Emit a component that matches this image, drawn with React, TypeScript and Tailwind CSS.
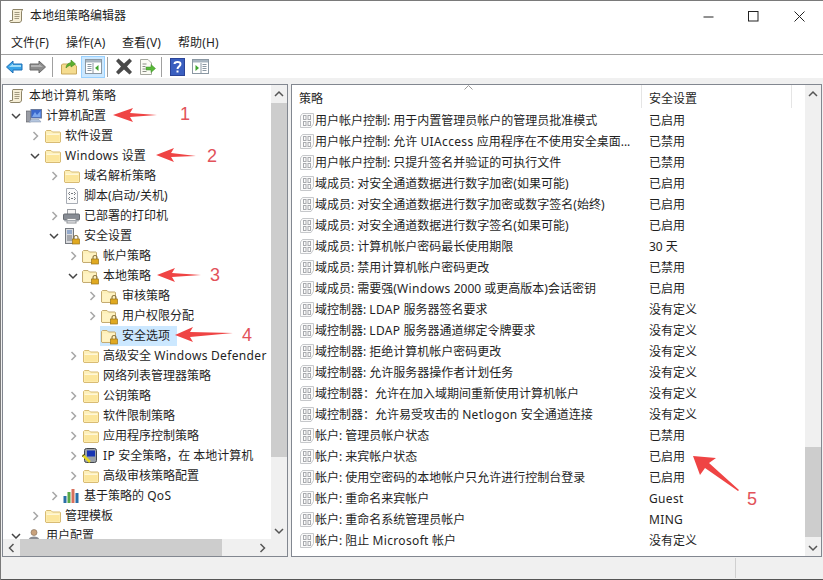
import React from "react";

const FONT = "font-['Noto_Sans','Noto_Sans_CJK_SC',sans-serif]";

function T({ s }: { s: string }) {
  return (
    <>
      {s.split(/([A-Za-z]{2,})/).map((part, i) =>
        i % 2 === 1 ? <span key={i} className="tracking-[0.35px]">{part}</span> : <React.Fragment key={i}>{part}</React.Fragment>
      )}
    </>
  );
}

function Folder() {
  return (
    <svg width="16" height="16" viewBox="0 0 16 16" className="shrink-0">
      <path d="M0.5 14V3.5L1.5 2.5H6L7.5 4H15L15.5 4.5V14L15 14.5H1Z" fill="#fdf0b8" stroke="#d8bb74" />
      <path d="M1.5 5.5H14.5V13.5H1.5Z" fill="#fce69c" />
      <path d="M1.5 5.5H14.5V7H1.5Z" fill="#fff7d8" />
    </svg>
  );
}

function Lock() {
  return (
    <g>
      <path d="M11 11V9.5a2 2 0 0 1 4 0V11" fill="none" stroke="#8a7440" strokeWidth="1.1" />
      <rect x="9.5" y="11" width="7" height="5" fill="#e0a920" stroke="#97731b" strokeWidth="0.7" />
    </g>
  );
}

function LockFolder() {
  return (
    <svg width="17" height="17" viewBox="0 0 17 17" className="shrink-0">
      <path d="M0.5 14V3.5L1.5 2.5H6L7.5 4H14L14.5 4.5V14L14 14.5H1Z" fill="#fdf0b8" stroke="#c4ab72" />
      <path d="M1.5 5.5H13.5V13.5H1.5Z" fill="#fff3c4" />
      <Lock />
    </svg>
  );
}

function Scroll() {
  return (
    <svg width="16" height="16" viewBox="0 0 16 16" className="shrink-0">
      <path d="M4 1.5H14C13 2 12.5 3 12.5 4V12C12.5 13.5 11.5 14.5 10 14.5H2C1 14.5 0.5 13.5 1 12.5H3.5V3C3.5 2 3.5 1.8 4 1.5Z" fill="#f6eed6" stroke="#8d8468" />
      <path d="M5.5 4.5H10.5M5.5 6.5H10.5M5.5 8.5H10.5M5.5 10.5H10" stroke="#a39a80" />
    </svg>
  );
}

function Computer() {
  return (
    <svg width="16" height="16" viewBox="0 0 16 16" className="shrink-0">
      <rect x="0.5" y="3" width="4" height="11" fill="#9a9da5" stroke="#55585f" strokeWidth="0.6" />
      <rect x="5" y="1.5" width="10.5" height="8.5" fill="#3a67cc" stroke="#6a7a9c" />
      <path d="M6 9L9 4L11 7L14.5 3V9H6Z" fill="#7ba6ee" />
      <path d="M3 14L5 11.5H13L15 14Z" fill="#b5c6de" stroke="#7f8fa9" strokeWidth="0.5" />
    </svg>
  );
}

function ScriptDoc() {
  return (
    <svg width="16" height="16" viewBox="0 0 16 16" className="shrink-0">
      <path d="M2.5 0.5H10.5L13.5 3.5V15.5H2.5Z" fill="#fbfbfb" stroke="#a8adb5" />
      <path d="M6 4L4.5 5.5L6 7M10 4L11.5 5.5L10 7M6 9L4.5 10.5L6 12M10 9L11.5 10.5L10 12" fill="none" stroke="#75797f" />
      <path d="M7 5.5H9M7 10.5H9" stroke="#75797f" />
    </svg>
  );
}

function Printer() {
  return (
    <svg width="17" height="16" viewBox="0 0 17 16" className="shrink-0">
      <rect x="4.5" y="1.5" width="8" height="5" fill="#f4f4f4" stroke="#9c9fa4" />
      <rect x="0.5" y="6" width="16" height="6" rx="1" fill="#878c94" stroke="#666a70" />
      <rect x="4" y="10.5" width="9" height="4.5" fill="#f8f8f8" stroke="#8e9196" />
      <rect x="1.5" y="12" width="14" height="1.5" fill="#a3a8ae" />
    </svg>
  );
}

function Server() {
  return (
    <svg width="17" height="17" viewBox="0 0 17 17" className="shrink-0">
      <rect x="2.5" y="0.5" width="8" height="15" fill="#d9dadd" stroke="#767a80" />
      <path d="M4 3H9M4 5H9" stroke="#4f78b8" />
      <rect x="4" y="7" width="5" height="6" fill="#a4a7ad" />
      <Lock />
    </svg>
  );
}

function IpSec() {
  return (
    <svg width="17" height="16" viewBox="0 0 17 16" className="shrink-0">
      <rect x="2.5" y="0.5" width="12" height="14" rx="2" fill="#9aa0a8" stroke="#44474d" />
      <rect x="5" y="2.5" width="8" height="6" fill="#1634b4" />
      <path d="M0.5 7L8 14" stroke="#e8d820" strokeWidth="2.4" />
      <path d="M0 8.5L3 6" stroke="#333" />
    </svg>
  );
}

function Qos() {
  return (
    <svg width="17" height="16" viewBox="0 0 17 16" className="shrink-0">
      <rect x="0.5" y="8" width="3" height="7" fill="#2a6fa8" />
      <rect x="4.5" y="4" width="3" height="11" fill="#58a848" />
      <rect x="8.5" y="1" width="3" height="14" fill="#d8705c" />
      <rect x="12.5" y="5" width="3" height="10" fill="#2a6fa8" />
    </svg>
  );
}

function UserCfg() {
  return (
    <svg width="16" height="16" viewBox="0 0 16 16" className="shrink-0">
      <circle cx="8" cy="4.5" r="3" fill="#c9a27c" stroke="#7d6a58" strokeWidth="0.6" />
      <path d="M2 14C2 10 5 8.5 8 8.5C11 8.5 14 10 14 14Z" fill="#8a8d94" />
    </svg>
  );
}

function PolicyIcon() {
  return (
    <svg width="14" height="15" viewBox="0 0 14 15" className="shrink-0">
      <path d="M2.5 0.5H13.5V10.5L11 14.5H0.5V3Z" fill="#fbfbfb" stroke="#c6c8cb" />
      <rect x="3.5" y="2.5" width="2.5" height="4" fill="none" stroke="#a9abaf" />
      <rect x="8" y="2.5" width="2.5" height="4" fill="none" stroke="#a9abaf" />
      <rect x="3.5" y="8.5" width="2.5" height="4" fill="none" stroke="#a9abaf" />
      <rect x="8" y="8.5" width="2.5" height="4" fill="none" stroke="#a9abaf" />
    </svg>
  );
}

function Chevron({ dir, color = "#6f6f6f" }: { dir: "right" | "down" | "up" | "left"; color?: string }) {
  const d = {
    right: "M3.5 1L7.5 5L3.5 9",
    left: "M6.5 1L2.5 5L6.5 9",
    down: "M1 3L5 7L9 3",
    up: "M1 7L5 3L9 7",
  }[dir];
  return (
    <svg width="10" height="10" viewBox="0 0 10 10" className="shrink-0">
      <path d={d} fill="none" stroke={color} strokeWidth="1.5" />
    </svg>
  );
}

type Exp = "open" | "closed" | "none";
type Row = { level: number; exp: Exp; icon: React.ReactNode; text: string; selected?: boolean };

const LEVEL = ["pl-[5px]", "pl-[8px]", "pl-[27px]", "pl-[46px]", "pl-[65px]", "pl-[84px]"];

const TREE: Row[] = [
  { level: 0, exp: "none", icon: <Scroll />, text: "本地计算机 策略" },
  { level: 1, exp: "open", icon: <Computer />, text: "计算机配置" },
  { level: 2, exp: "closed", icon: <Folder />, text: "软件设置" },
  { level: 2, exp: "open", icon: <Folder />, text: "Windows 设置" },
  { level: 3, exp: "closed", icon: <Folder />, text: "域名解析策略" },
  { level: 3, exp: "none", icon: <ScriptDoc />, text: "脚本(启动/关机)" },
  { level: 3, exp: "closed", icon: <Printer />, text: "已部署的打印机" },
  { level: 3, exp: "open", icon: <Server />, text: "安全设置" },
  { level: 4, exp: "closed", icon: <LockFolder />, text: "帐户策略" },
  { level: 4, exp: "open", icon: <LockFolder />, text: "本地策略" },
  { level: 5, exp: "closed", icon: <LockFolder />, text: "审核策略" },
  { level: 5, exp: "closed", icon: <LockFolder />, text: "用户权限分配" },
  { level: 5, exp: "none", icon: <LockFolder />, text: "安全选项", selected: true },
  { level: 4, exp: "closed", icon: <Folder />, text: "高级安全 Windows Defender" },
  { level: 4, exp: "none", icon: <Folder />, text: "网络列表管理器策略" },
  { level: 4, exp: "closed", icon: <Folder />, text: "公钥策略" },
  { level: 4, exp: "closed", icon: <Folder />, text: "软件限制策略" },
  { level: 4, exp: "closed", icon: <Folder />, text: "应用程序控制策略" },
  { level: 4, exp: "closed", icon: <IpSec />, text: "IP 安全策略，在 本地计算机" },
  { level: 4, exp: "closed", icon: <Folder />, text: "高级审核策略配置" },
  { level: 3, exp: "closed", icon: <Qos />, text: "基于策略的 QoS" },
  { level: 2, exp: "closed", icon: <Folder />, text: "管理模板" },
  { level: 1, exp: "open", icon: <UserCfg />, text: "用户配置" },
];

const POLICIES: [string, string][] = [
  ["用户帐户控制: 用于内置管理员帐户的管理员批准模式", "已启用"],
  ["用户帐户控制: 允许 UIAccess 应用程序在不使用安全桌面...", "已禁用"],
  ["用户帐户控制: 只提升签名并验证的可执行文件", "已禁用"],
  ["域成员: 对安全通道数据进行数字加密(如果可能)", "已启用"],
  ["域成员: 对安全通道数据进行数字加密或数字签名(始终)", "已启用"],
  ["域成员: 对安全通道数据进行数字签名(如果可能)", "已启用"],
  ["域成员: 计算机帐户密码最长使用期限", "30 天"],
  ["域成员: 禁用计算机帐户密码更改", "已禁用"],
  ["域成员: 需要强(Windows 2000 或更高版本)会话密钥", "已启用"],
  ["域控制器: LDAP 服务器签名要求", "没有定义"],
  ["域控制器: LDAP 服务器通道绑定令牌要求", "没有定义"],
  ["域控制器: 拒绝计算机帐户密码更改", "没有定义"],
  ["域控制器: 允许服务器操作者计划任务", "没有定义"],
  ["域控制器：允许在加入域期间重新使用计算机帐户", "没有定义"],
  ["域控制器：允许易受攻击的 Netlogon 安全通道连接", "没有定义"],
  ["帐户: 管理员帐户状态", "已禁用"],
  ["帐户: 来宾帐户状态", "已启用"],
  ["帐户: 使用空密码的本地帐户只允许进行控制台登录", "已启用"],
  ["帐户: 重命名来宾帐户", "Guest"],
  ["帐户: 重命名系统管理员帐户", "MING"],
  ["帐户: 阻止 Microsoft 帐户", "没有定义"],
];

function VScroll({ thumb }: { thumb: string }) {
  return (
    <div className="w-[16px] shrink-0 flex flex-col bg-[#f0f0f0]">
      <div className="h-[17px] flex items-center justify-center"><Chevron dir="up" color="#555" /></div>
      <div className="flex-1"><div className={thumb} /></div>
      <div className="h-[17px] flex items-center justify-center"><Chevron dir="down" color="#555" /></div>
    </div>
  );
}

function Sep({ cls }: { cls: string }) {
  return <div className={"w-px h-[20px] bg-[#a0a0a0] shrink-0 " + cls} />;
}

function Arrow({ cls, w, h, points }: { cls: string; w: number; h: number; points: string }) {
  return (
    <svg width={w} height={h} viewBox={"0 0 " + w + " " + h} className={"absolute " + cls}>
      <polygon points={points} fill="#ef4444" />
    </svg>
  );
}

function Num({ cls, children }: { cls: string; children: React.ReactNode }) {
  return <span className={"absolute text-[18px] leading-[20px] text-[#e2525a] font-['Liberation_Sans',sans-serif] " + cls}>{children}</span>;
}

export default function App() {
  return (
    <div className={"relative w-[823px] h-[580px] overflow-hidden flex flex-col bg-[#f0f0f0] border-t border-l border-[#7a7a7a] text-[12px] text-[#1f1f1f] " + FONT}>
      <div className="h-[30px] shrink-0 bg-white flex items-center pl-[8px]">
        <Scroll />
        <span className="ml-[5px] leading-[16px]">本地组策略编辑器</span>
        <div className="ml-auto flex items-center pr-[18px]">
          <svg width="11" height="11" viewBox="0 0 11 11" className="mr-[34px]"><path d="M0.5 6H10.5" stroke="#222" /></svg>
          <svg width="11" height="11" viewBox="0 0 11 11" className="mr-[35px]"><rect x="0.5" y="0.5" width="9.5" height="9.5" fill="none" stroke="#222" /></svg>
          <svg width="11" height="11" viewBox="0 0 11 11"><path d="M0.5 0.5L10.5 10.5M10.5 0.5L0.5 10.5" stroke="#222" /></svg>
        </div>
      </div>
      <div className="h-[23px] shrink-0 bg-white flex items-center gap-[16px] pl-[10px] border-b border-[#a0a0a0] box-content tracking-[0.1px]">
        <span className="w-[39px]">文件(F)</span>
        <span className="w-[40px]">操作(A)</span>
        <span className="w-[40px]">查看(V)</span>
        <span>帮助(H)</span>
      </div>
      <div className="h-[23px] shrink-0 bg-white flex items-center pl-[5px]">
        <svg width="17" height="14" viewBox="0 0 17 14" className="shrink-0">
          <path d="M0.5 7L7 1V4H16V10H7V13Z" fill="#38a4e8" stroke="#1f6fb5" />
          <path d="M3 7L7 3.5V5H15V7Z" fill="#9fdcf8" />
        </svg>
        <svg width="17" height="14" viewBox="0 0 17 14" className="shrink-0 ml-[6px]">
          <path d="M16.5 7L10 1V4H1V10H10V13Z" fill="#8c8c8c" stroke="#6a6a6a" />
          <path d="M2 5H10V4L14 7H2Z" fill="#b4b4b4" />
        </svg>
        <Sep cls="ml-[6px]" />
        <svg width="16" height="16" viewBox="0 0 16 16" className="shrink-0 ml-[8px]">
          <path d="M0.5 15V6L1.5 5H13L15.5 7V15Z" fill="#f5dc8f" stroke="#c9a95c" />
          <path d="M5 9C5 6 7 4 10 3.5V1L14.5 5L10 8V6C8 6.5 6.5 7.5 5 9Z" fill="#5cb030" stroke="#3f8a20" strokeWidth="0.6" />
        </svg>
        <div className="ml-[4px] w-[24px] h-[22px] shrink-0 bg-[#cce8ff] border border-[#99d1ff] flex items-center justify-center">
          <svg width="17" height="15" viewBox="0 0 17 15">
            <rect x="0.5" y="0.5" width="16" height="14" fill="#fff" stroke="#8b98a3" />
            <rect x="1" y="1" width="15" height="2.5" fill="#a8b5c0" />
            <path d="M2.5 5.5H6.5M2.5 7.5H6.5M2.5 9.5H6.5M2.5 11.5H6.5" stroke="#8b98a3" />
            <path d="M8 4V14" stroke="#8b98a3" />
            <path d="M13.5 6V12L10 9Z" fill="#3fa52f" />
          </svg>
        </div>
        <Sep cls="ml-[2px]" />
        <svg width="18" height="17" viewBox="0 0 18 17" className="shrink-0 ml-[7px]">
          <path d="M1 3L3.5 0.5L9 5.5L14.5 0.5L17 3L12 8.5L17 14L14.5 16.5L9 11.5L3.5 16.5L1 14L6 8.5Z" fill="#4a4a4a" />
        </svg>
        <svg width="17" height="16" viewBox="0 0 17 16" className="shrink-0 ml-[6px]">
          <path d="M1.5 0.5H9L12.5 4V15.5H1.5Z" fill="#fbfbf4" stroke="#a5a89f" />
          <path d="M3.5 5H7.5M3.5 7.5H6.5M3.5 10H6.5M3.5 12.5H7.5" stroke="#8a8d85" />
          <path d="M7 8H12V5.5L16.5 9.5L12 13.5V11H7Z" fill="#58b838" stroke="#3f8f28" strokeWidth="0.5" />
        </svg>
        <Sep cls="ml-[5px]" />
        <svg width="15" height="18" viewBox="0 0 15 18" className="shrink-0 ml-[8px]">
          <rect x="0.5" y="0.5" width="14" height="17" fill="#3a5fc0" stroke="#2b4498" />
          <path d="M4.5 6C4.5 3.5 10.5 3 10.5 6C10.5 8.5 7.5 8.5 7.5 11" fill="none" stroke="#fff" strokeWidth="2" />
          <rect x="6.5" y="12.5" width="2" height="2" fill="#fff" />
        </svg>
        <svg width="17" height="15" viewBox="0 0 17 15" className="shrink-0 ml-[7px]">
          <rect x="0.5" y="0.5" width="16" height="14" fill="#fff" stroke="#8b98a3" />
          <rect x="1" y="1" width="15" height="2.5" fill="#a8b5c0" />
          <path d="M10.5 5.5H14.5M10.5 7.5H14.5M10.5 9.5H14.5M10.5 11.5H14.5" stroke="#8b98a3" />
          <path d="M9 4V14" stroke="#8b98a3" />
          <path d="M3.5 6V12L7 9Z" fill="#3fa52f" />
        </svg>
      </div>
      <div className="h-[473px] shrink-0 mt-[6px] flex gap-[3px] pl-[1px] pr-[1px]">
        <div className="w-[286px] shrink-0 border border-[#828790] bg-white flex flex-col">
          <div className="h-[454px] flex">
            <div className="flex-1 min-w-0 overflow-hidden pt-[1px]">
              {TREE.map((r) => (
                <div key={r.text} className={"h-[20px] flex items-center whitespace-nowrap " + LEVEL[r.level]}>
                  {r.level > 0 && (
                    <span className="w-[10px] mr-[4px] shrink-0 flex justify-center">
                      {r.exp !== "none" && <Chevron dir={r.exp === "open" ? "down" : "right"} color={r.exp === "open" ? "#444" : "#a6a6a6"} />}
                    </span>
                  )}
                  <span className={"h-[20px] flex items-center shrink-0 " + (r.selected ? "bg-[#cce8ff] w-[77px] -ml-[1px] pl-[1px]" : "")}>
                    <span className="w-[17px] flex justify-center shrink-0">{r.icon}</span>
                    <span className="ml-[4px] leading-[16px]"><T s={r.text} /></span>
                  </span>
                </div>
              ))}
            </div>
            <VScroll thumb="mt-[1px] h-[354px] bg-[#cdcdcd]" />
          </div>
          <div className="h-[17px] flex items-center bg-[#f0f0f0]">
            <div className="w-[17px] flex justify-center"><Chevron dir="left" color="#555" /></div>
            <div className="w-[202px] h-[17px] bg-[#cdcdcd]" />
            <div className="ml-auto w-[50px] flex justify-center"><Chevron dir="right" color="#555" /></div>
          </div>
        </div>
        <div className="flex-1 min-w-0 border border-[#828790] bg-white flex">
          <div className="flex-1 min-w-0">
            <div className="relative h-[25px] flex items-start">
              <div className="w-[350px] h-[23px] pl-[7px] pt-[4px] flex items-center border-r border-[#e5e5e5]">策略</div>
              <div className="w-[150px] h-[23px] pl-[7px] pt-[4px] flex items-center border-r border-[#e5e5e5]">安全设置</div>
              <svg width="9" height="5" viewBox="0 0 9 5" className="absolute left-[172px] top-[0px]"><path d="M0.5 4.5L4.5 0.5L8.5 4.5" fill="none" stroke="#9a9a9a" /></svg>
            </div>
            {POLICIES.map(([a, b]) => (
              <div key={a} className="h-[21px] flex items-center whitespace-nowrap">
                <div className="w-[350px] pl-[8px] flex items-center gap-[1px]">
                  <PolicyIcon />
                  <span className="leading-[16px]"><T s={a} /></span>
                </div>
                <div className="pl-[7px] leading-[16px]"><T s={b} /></div>
              </div>
            ))}
          </div>
          <VScroll thumb="mt-[345px] h-[90px] bg-[#cdcdcd]" />
        </div>
      </div>
      <div className="flex-1 flex justify-end border-b border-[#555]">
        <div className="w-[88px] border-l border-[#d0d0d0] my-[1px]" />
      </div>

      <Arrow cls="left-[111px] top-[106px]" w={46} h={16} points="1,8 21,1 18,6 45,8 18,10 21,15" />
      <Num cls="left-[179px] top-[103px]">1</Num>
      <Arrow cls="left-[154px] top-[146px]" w={42} h={16} points="1,8 19,1 16,6 41,9 16,10 19,15" />
      <Num cls="left-[206px] top-[145px]">2</Num>
      <Arrow cls="left-[155px] top-[266px]" w={46} h={16} points="1,8 19,1 16,6 45,8 16,10 19,15" />
      <Num cls="left-[209px] top-[264px]">3</Num>
      <Arrow cls="left-[173px] top-[325px]" w={60} h={16} points="1,9 19,1 16,6 59,7 16,11 19,16" />
      <Num cls="left-[241px] top-[324px]">4</Num>
      <Arrow cls="left-[691px] top-[454px]" w={50} h={38} points="1,1 24,3 17,8 47,35 46,36 13,13 8,20" />
      <Num cls="left-[746px] top-[488px]">5</Num>
    </div>
  );
}
